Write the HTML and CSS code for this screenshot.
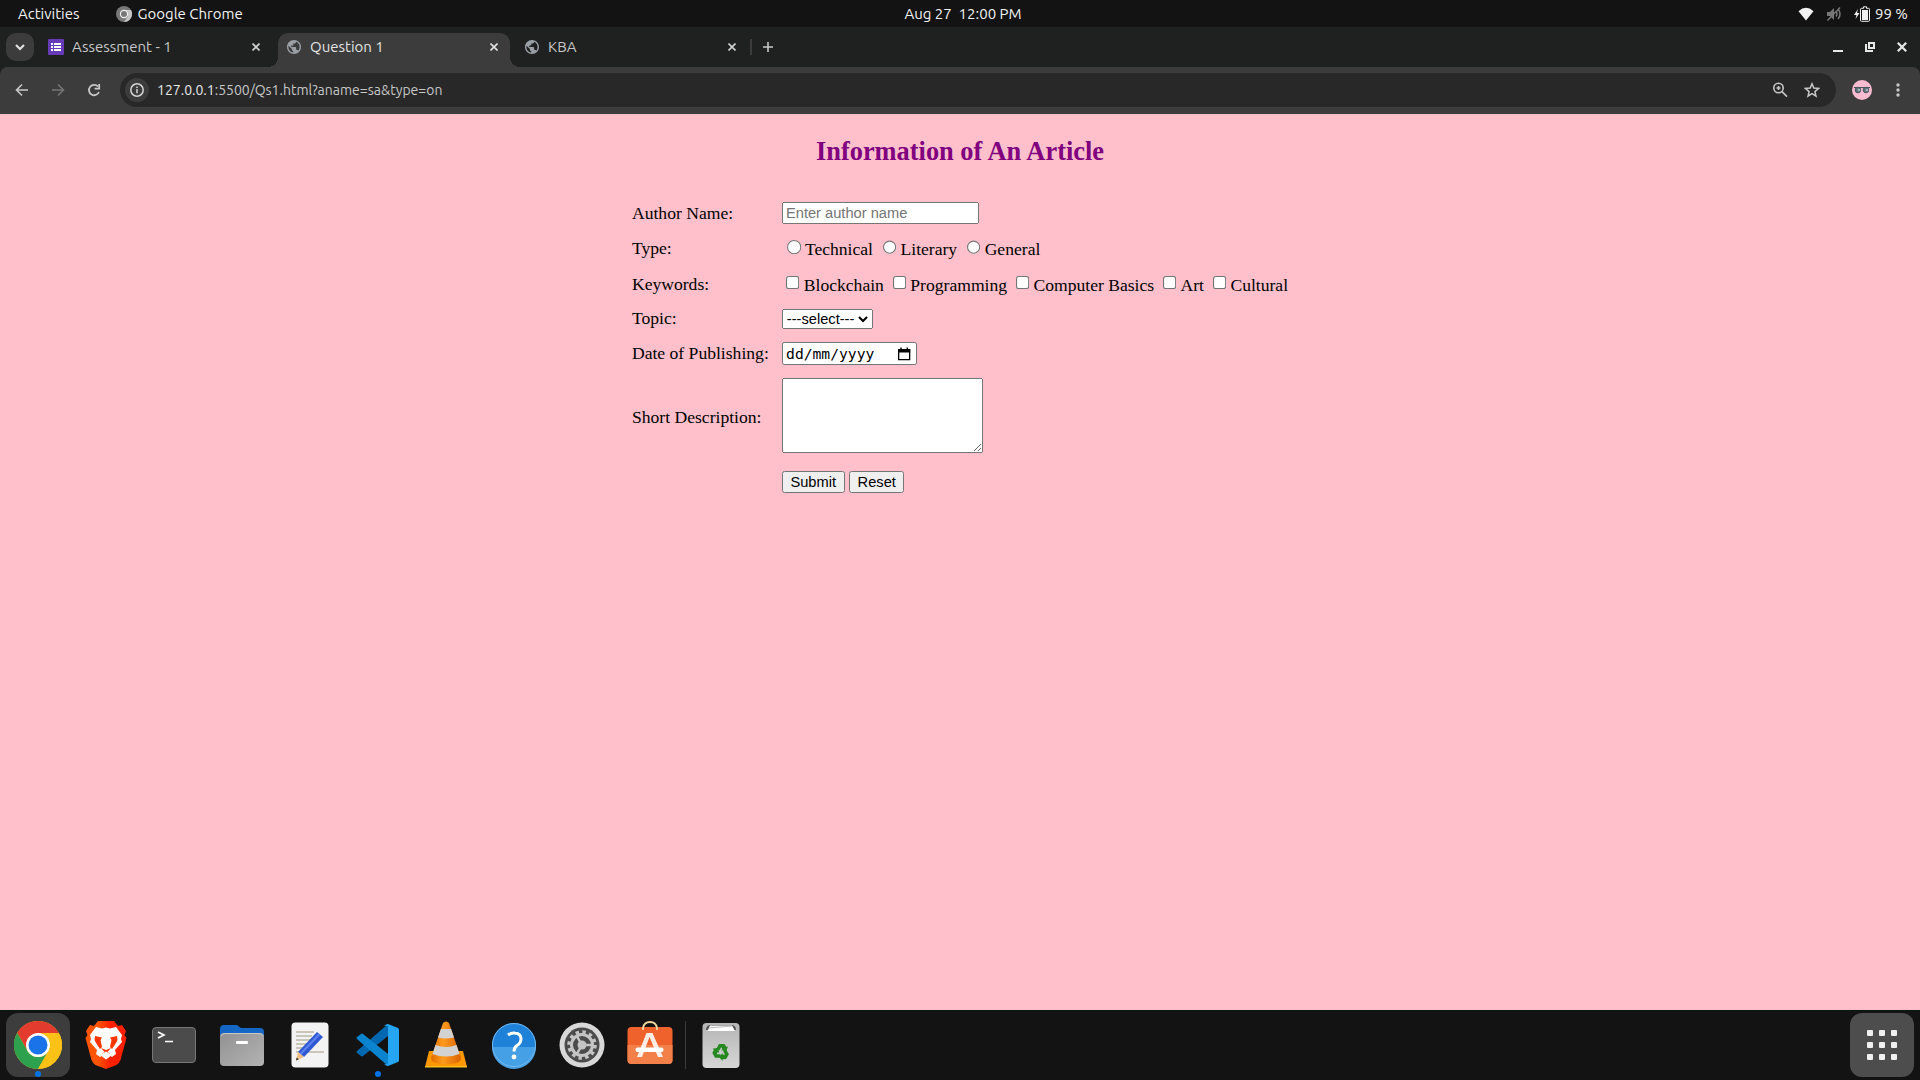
FILE: index.html
```html
<!DOCTYPE html>
<html lang="en-GB">
<head>
<meta charset="utf-8">
<title>Question 1</title>
<link rel="stylesheet" href="styles.css">
</head>
<body class="desktop">

<header class="panel">
  <div class="panel-left">
    <button class="panel-button" type="button">Activities</button>
    <button class="panel-button panel-app" type="button">
      <svg width="16" height="16" viewBox="0 0 16 16"><circle cx="8" cy="8" r="8" fill="#777"/><path d="M8 4h7a8 8 0 0 1-7 12l4-6z" fill="#c4c4c4"/><circle cx="8" cy="8" r="4.200" fill="#eee"/><circle cx="8" cy="8" r="3" fill="#777"/></svg>
      Google Chrome
    </button>
  </div>
  <time class="clock">Aug 27&nbsp; 12:00 PM</time>
  <div class="panel-right">
    <svg width="16" height="16" viewBox="0 0 16 16"><path d="M.5 5.200Q8-1.500 15.500 5.200L8 14.500z" fill="#f2f2f2"/></svg>
    <svg width="16" height="16" viewBox="0 0 16 16" fill="none" stroke="#777" stroke-width="1.500"><path d="M1 6h3l4-4v12l-4-4H1z" fill="#777" stroke="none"/><path d="M10 5.500q2 2.500 0 5M12 3q4 5 0 10M1.500 14.500L14 1.500"/></svg>
    <span class="battery">
      <svg width="16" height="16" viewBox="0 0 16 16"><path d="M4 3L0 9h2.500L1.500 13 5.500 7H3z" fill="#f2f2f2"/><path d="M9.500.8h3v1.500h2a1 1 0 0 1 1 1v11a1 1 0 0 1-1 1h-7a1 1 0 0 1-1-1v-11a1 1 0 0 1 1-1h2z" fill="none" stroke="#f2f2f2"/><rect x="8" y="4" width="6" height="10" fill="#f2f2f2"/></svg>
      99 %
    </span>
  </div>
</header>

<nav class="tab-strip">
  <button class="tab-search" type="button" aria-label="Search tabs"><svg width="10" height="10" viewBox="0 0 10 10"><path d="M1 3l4 4 4-4" fill="none" stroke="#e3e3e3" stroke-width="2"/></svg></button>
  <div class="tab">
    <svg width="16" height="16" viewBox="0 0 16 16"><rect width="16" height="16" rx="1" fill="#673ab7"/><path d="M3 4h2v2H3zm3 0h7v2H6zM3 7h2v2H3zm3 0h7v2H6zm-3 3h2v2H3zm3 0h7v2H6z" fill="#fff"/></svg>
    <a class="tab-title" href="#">Assessment - 1</a>
    <button class="tab-close" type="button" aria-label="Close tab"><svg width="8" height="8" viewBox="0 0 8 8"><path d="M.5.500l7 7m0-7l-7 7" stroke="#d0d0d0" stroke-width="1.600"/></svg></button>
  </div>
  <div class="tab tab-active">
    <svg width="16" height="16" viewBox="0.600 0.600 22.800 22.800"><path fill="#9aa0a6" d="M12 2C6.480 2 2 6.480 2 12s4.480 10 10 10 10-4.480 10-10S17.520 2 12 2zm-1 17.930c-3.950-.49-7-3.850-7-7.930 0-.62.08-1.210.21-1.790L9 15v1c0 1.100.9 2 2 2v1.930zm6.900-2.540c-.26-.81-1-1.390-1.900-1.390h-1v-3c0-.55-.45-1-1-1H8v-2h2c.55 0 1-.45 1-1V7h2c1.100 0 2-.9 2-2v-.41c2.930 1.190 5 4.060 5 7.410 0 2.080-.8 3.970-2.100 5.390z"/></svg>
    <a class="tab-title" href="#">Question 1</a>
    <button class="tab-close" type="button" aria-label="Close tab"><svg width="8" height="8" viewBox="0 0 8 8"><path d="M.5.500l7 7m0-7l-7 7" stroke="#e3e3e3" stroke-width="1.600"/></svg></button>
  </div>
  <div class="tab">
    <svg width="16" height="16" viewBox="0.600 0.600 22.800 22.800"><path fill="#9aa0a6" d="M12 2C6.480 2 2 6.480 2 12s4.480 10 10 10 10-4.480 10-10S17.520 2 12 2zm-1 17.930c-3.950-.49-7-3.850-7-7.930 0-.62.08-1.210.21-1.790L9 15v1c0 1.100.9 2 2 2v1.930zm6.900-2.540c-.26-.81-1-1.390-1.900-1.390h-1v-3c0-.55-.45-1-1-1H8v-2h2c.55 0 1-.45 1-1V7h2c1.100 0 2-.9 2-2v-.41c2.930 1.190 5 4.060 5 7.410 0 2.080-.8 3.970-2.100 5.390z"/></svg>
    <a class="tab-title" href="#">KBA</a>
    <button class="tab-close" type="button" aria-label="Close tab"><svg width="8" height="8" viewBox="0 0 8 8"><path d="M.5.500l7 7m0-7l-7 7" stroke="#d0d0d0" stroke-width="1.600"/></svg></button>
  </div>
  <span class="tab-divider"></span>
  <button class="new-tab" type="button" aria-label="New tab"><svg width="10" height="10" viewBox="0 0 10 10"><path d="M5 0v10M0 5h10" stroke="#c7c7c7" stroke-width="1.600"/></svg></button>
  <div class="window-controls">
    <button type="button" aria-label="Minimise"><svg width="10" height="10" viewBox="0 0 10 10"><path d="M0 9h10" stroke="#e8e8e8" stroke-width="2"/></svg></button>
    <button type="button" aria-label="Restore"><svg width="10" height="10" viewBox="0 0 10 10" fill="none" stroke="#e8e8e8" stroke-width="2"><path d="M4 1h5v5H4z"/><path d="M1 2v7h7"/></svg></button>
    <button type="button" aria-label="Close"><svg width="10" height="10" viewBox="0 0 10 10"><path d="M.8.800l8.400 8.400m0-8.400L.8 9.200" stroke="#e8e8e8" stroke-width="2.200"/></svg></button>
  </div>
</nav>

<div class="toolbar">
  <div class="nav-buttons">
    <button type="button" aria-label="Back"><svg width="16" height="16" viewBox="0 0 16 16" fill="none" stroke="#c7c7c7" stroke-width="1.600"><path d="M14 8H3M8 2.500L2.500 8 8 13.500"/></svg></button>
    <button type="button" aria-label="Forward"><svg width="16" height="16" viewBox="0 0 16 16" fill="none" stroke="#757575" stroke-width="1.600"><path d="M2 8h11M8 2.500L13.500 8 8 13.500"/></svg></button>
    <button type="button" aria-label="Reload"><svg width="16" height="16" viewBox="0 0 16 16" fill="none" stroke="#c7c7c7" stroke-width="1.800"><path d="M13 10a5.200 5.200 0 1 1-1-5.500"/><path d="M13.200 2v4.700H8.600"/></svg></button>
  </div>
  <div class="address-bar">
    <button class="site-info" type="button" aria-label="Site information"><svg width="16" height="16" viewBox="0 0 16 16"><circle cx="8" cy="8" r="6.200" fill="none" stroke="#d5d5d5" stroke-width="1.500"/><path d="M8 7v4.300M8 4.500v1.600" stroke="#d5d5d5" stroke-width="1.500"/></svg></button>
    <span class="url"><span class="url-host">127.0.0.1</span>:5500/Qs1.html?aname=sa&amp;type=on</span>
    <button type="button" aria-label="Zoom"><svg width="16" height="16" viewBox="0 0 16 16" fill="none" stroke="#c7c7c7" stroke-width="1.600"><circle cx="6.500" cy="6" r="4.700"/><path d="M10 9.600l5 5M6.500 4v4M4.500 6h4"/></svg></button>
    <button type="button" aria-label="Bookmark"><svg width="16" height="16" viewBox="0 0 16 16" fill="none" stroke="#c7c7c7" stroke-width="1.500"><path d="M8 1.800l1.800 4.300 4.700.400-3.600 3.100 1.100 4.600L8 11.700l-4 2.500 1.100-4.600L1.500 6.500l4.700-.4z"/></svg></button>
  </div>
  <button class="profile" type="button" aria-label="Profile"><svg width="20" height="20" viewBox="0 0 20 20"><circle cx="10" cy="10" r="10" fill="#f8bbd0"/><path d="M2 7.500h16" stroke="#455" stroke-width="1"/><circle cx="6" cy="10" r="2.800" fill="#607078" stroke="#4a565c"/><circle cx="14" cy="10" r="2.800" fill="#607078" stroke="#4a565c"/><circle cx="7" cy="10" r="1.300" fill="#a4b8c2"/><circle cx="15" cy="10" r="1.300" fill="#a4b8c2"/></svg></button>
  <button class="menu" type="button" aria-label="Menu"><svg width="16" height="16" viewBox="0 0 16 16" fill="#c7c7c7"><circle cx="8" cy="3" r="1.700"/><circle cx="8" cy="8" r="1.700"/><circle cx="8" cy="13" r="1.700"/></svg></button>
</div>

<main class="page">
  <h2 class="page-title">Information of An Article</h2>
  <form class="article-form" onsubmit="return false">
    <table class="form-table">
      <tr>
        <td><label for="aname">Author Name:</label></td>
        <td><input type="text" id="aname" name="aname" placeholder="Enter author name"></td>
      </tr>
      <tr>
        <td>Type:</td>
        <td>
          <input type="radio" id="technical" name="type"><label for="technical">Technical</label>
          <input type="radio" id="literary" name="type"><label for="literary">Literary</label>
          <input type="radio" id="general" name="type"><label for="general">General</label>
        </td>
      </tr>
      <tr>
        <td>Keywords:</td>
        <td>
          <input type="checkbox" id="blockchain"><label for="blockchain">Blockchain</label>
          <input type="checkbox" id="programming"><label for="programming">Programming</label>
          <input type="checkbox" id="basics"><label for="basics">Computer Basics</label>
          <input type="checkbox" id="art"><label for="art">Art</label>
          <input type="checkbox" id="cultural"><label for="cultural">Cultural</label>
        </td>
      </tr>
      <tr>
        <td><label for="topic">Topic:</label></td>
        <td><select id="topic"><option>---select---</option></select></td>
      </tr>
      <tr>
        <td><label for="published">Date of Publishing:</label></td>
        <td>
          <span class="date-field">
            <input type="text" id="published" placeholder="dd/mm/yyyy">
            <button type="button" aria-label="Show date picker"><svg width="13" height="13" viewBox="0 0 13 13"><path d="M1.500 2.500h10v9h-10z" fill="none" stroke="#000" stroke-width="1.200"/><path d="M1 2h11v3H1zM3 .5h1.300v2H3zm5.700 0H10v2H8.700z"/></svg></button>
          </span>
        </td>
      </tr>
      <tr>
        <td><label for="description">Short Description:</label></td>
        <td><textarea id="description" rows="4" cols="20"></textarea></td>
      </tr>
      <tr>
        <td></td>
        <td><button type="submit">Submit</button> <button type="reset">Reset</button></td>
      </tr>
    </table>
  </form>
</main>

<footer class="dock">
  <button class="dock-item dock-focused dock-running" type="button" aria-label="Google Chrome">
    <svg width="48" height="48" viewBox="0 0 48 48"><circle cx="24" cy="24" r="24" fill="#fbc116"/><path d="M3.200 12a24 24 0 0 1 41.600 0H24L13.600 30z" fill="#e33b2e"/><path d="M3.200 12L13.600 30a12 12 0 0 0 20.800 0L24 48A24 24 0 0 1 3.200 12z" fill="#2da14d"/><path d="M24 12h20.800A24 24 0 0 1 24 48l10.400-18A12 12 0 0 0 24 12z" fill="#fbc116"/><circle cx="24" cy="24" r="12" fill="#fff"/><circle cx="24" cy="24" r="9.500" fill="#1a73e8"/></svg>
  </button>
  <button class="dock-item" type="button" aria-label="Brave">
    <svg width="48" height="48" viewBox="0 0 48 48"><defs><linearGradient id="brave"><stop offset=".3" stop-color="#ff5500"/><stop offset=".6" stop-color="#ff2000"/></linearGradient></defs><path d="M16 0h16l4 5 4-1 4 6-1.500 4 2 3-6 22q-1 3-4 5L24 48l-10.500-4q-3-2-4-5l-6-22 2-3L4 10l4-6 4 1z" fill="url(#brave)"/><path d="M14 6l6 1.500 4-1 4 1L34 6l6 8-1 4 1 3-7 8 1 4-4 3-6-4-6 4-4-3 1-4-7-8 1-3-1-4z" fill="#fff"/><path d="M13 15l7 1.500-1.500 2.500 1.500 7-2 2-4-6-1.500-3zM35 15l-7 1.500 1.500 2.500-1.500 7 2 2 4-6 1.500-3z" fill="#fb3600"/><path d="M19 27l5 2 5-2-3.500 4 5 3.500-6.500-2.500-6.500 2.500 5-3.500z" fill="#fb3600"/><path d="M24 30.500l6 3.500-6 4.500-6-4.500z" fill="#fff"/></svg>
  </button>
  <button class="dock-item" type="button" aria-label="Terminal">
    <svg width="48" height="48" viewBox="0 0 48 48"><rect x="2.500" y="6.500" width="43" height="35" rx="3.500" fill="#4b4b4b" stroke="#777"/><path d="M8 11l6 3-6 3M15 20.500h8" fill="none" stroke="#fff" stroke-width="1.600"/></svg>
  </button>
  <button class="dock-item" type="button" aria-label="Files">
    <svg width="48" height="48" viewBox="0 0 48 48"><defs><linearGradient id="files" x2="1" y2="1"><stop stop-color="#929292"/><stop offset="1" stop-color="#b3b3b3"/></linearGradient></defs><path d="M2 8q0-4 4-4h13l4 3h19q4 0 4 4v16H2z" fill="#1567c5"/><rect x="2" y="12" width="44" height="33" rx="4" fill="url(#files)"/><path d="M3 15q1-2.500 4-2.500h34q3 0 4 2.500" fill="none" stroke="#c8c8c8"/><rect x="18" y="20" width="12" height="3" rx="1" fill="#fff"/></svg>
  </button>
  <button class="dock-item" type="button" aria-label="Text Editor">
    <svg width="48" height="48" viewBox="0 0 48 48"><rect x="5.500" y="1.500" width="37" height="45" rx="4" fill="#f3f3f3"/><path d="M10 11h18M10 15h16M10 19h17M10 23h12M10 27h8M10 31h28" stroke="#c9c5b9" stroke-width="2"/><path d="M12 31l19-20 6 5-19 20z" fill="#2f59d3"/><path d="M14.500 33l19-20" stroke="#5c83ee" stroke-width="2"/><path d="M12 31l6 5-8 3.500z" fill="#f5bd83"/><path d="M10.600 36.500L10 39.500l3-1.200z" fill="#333"/></svg>
  </button>
  <button class="dock-item dock-running" type="button" aria-label="Visual Studio Code">
    <svg width="48" height="48" viewBox="0 0 48 48"><path d="M34 3v12L9 35q-1 .8-2 0l-4-3q-1-1 0-2z" fill="#0068b0"/><path d="M34 45V33L9 13q-1-.8-2 0l-4 3q-1 1 0 2z" fill="#0a84cf"/><path d="M34 3l10 4q1 .5 1 2v30q0 1.500-1 2l-10 4q-2 0-4-2 4 1 4-1V6q0-2-4-1 2-2 4-2z" fill="#26a6f2"/></svg>
  </button>
  <button class="dock-item" type="button" aria-label="VLC media player">
    <svg width="48" height="48" viewBox="0 0 48 48"><defs><linearGradient id="cone"><stop stop-color="#e06c00"/><stop offset=".4" stop-color="#ff9a1e"/><stop offset="1" stop-color="#d96200"/></linearGradient></defs><path d="M7 30h34l4 16H3z" fill="#ff9800"/><path d="M3 45h42v1.500H3z" fill="#ffc020"/><path d="M21 2q3-3 6 0l12 35q0 6-15 6T9 37z" fill="url(#cone)"/><path d="M18.900 8h10.200l2.900 8.500q-8 2-16 0z" fill="#d2d2d2"/><path d="M13.500 24q10.500 4 21 0l3 9q-13.500 5-27 0z" fill="#d2d2d2"/></svg>
  </button>
  <button class="dock-item" type="button" aria-label="Help">
    <svg width="48" height="48" viewBox="0 0 48 48"><circle cx="24" cy="24" r="22" fill="#1f82d8"/><path d="M2 26h44a22 22 0 0 1-44 0z" fill="#46a0e5"/><circle cx="24" cy="24" r="21.500" fill="none" stroke="#75b8ed"/><path d="M18 14q3-2.500 7-2 6 .5 6 6 0 4-4 6.500-3 2-3 6" fill="none" stroke="#fff" stroke-width="3"/><circle cx="24" cy="36" r="2.400" fill="#fff"/></svg>
  </button>
  <button class="dock-item" type="button" aria-label="Settings">
    <svg width="48" height="48" viewBox="0 0 48 48"><circle cx="24" cy="24" r="22.500" fill="#d8d8d8"/><circle cx="24" cy="24" r="17.500" fill="#4b4b4b"/><circle cx="24" cy="24" r="13" fill="none" stroke="#c4c4c4" stroke-width="3.500" stroke-dasharray="3.400 3.407"/><circle cx="24" cy="24" r="10.500" fill="none" stroke="#c4c4c4" stroke-width="3"/><path d="M24 24h10M24 24l-5-8.700M24 24l-5 8.700" stroke="#c4c4c4" stroke-width="2.500"/><circle cx="24" cy="24" r="4.500" fill="#c4c4c4"/></svg>
  </button>
  <button class="dock-item" type="button" aria-label="Software">
    <svg width="48" height="48" viewBox="0 0 48 48"><rect x="1.500" y="6" width="45" height="37" rx="4" fill="#f0622b"/><path d="M1.500 24h45v15q0 4-4 4h-37q-4 0-4-4z" fill="#f37f49"/><path d="M17 9V7q1-6 7-6t7 6v2" fill="none" stroke="#f3d9a0" stroke-width="1.800"/><path d="M11 36l9.500-24h6L37 36h-5l-8.500-20L16 36z" fill="#fff" fill-opacity=".88"/><rect x="9.500" y="26.500" width="28" height="4.500" rx="2" fill="#fff"/></svg>
  </button>
  <span class="dock-divider"></span>
  <button class="dock-item" type="button" aria-label="Trash">
    <svg width="48" height="48" viewBox="0 0 48 48"><defs><linearGradient id="trash" x2="0" y2="1"><stop stop-color="#b5b5b5"/><stop offset="1" stop-color="#d6d6d6"/></linearGradient><path id="arrow" d="M-4.500-3.500L-2-8h5.500l2 3 1.500-.8-1.800 5.300-5.200-1.500 1.600-.8-1.400-2-1.800 3.300z"/></defs><rect x="5.500" y="2" width="37" height="45" rx="4" fill="url(#trash)"/><path d="M9 9q0-5 5-5h20q5 0 5 5" fill="#555"/><path d="M10.500 10L13 4.500h22l3 5.500z" fill="#fff"/><path d="M12 7l23-2" stroke="#bbb"/><g fill="#26891f" transform="translate(24 31)"><use href="#arrow"/><use href="#arrow" transform="rotate(120)"/><use href="#arrow" transform="rotate(240)"/></g></svg>
  </button>
  <button class="dock-item dock-apps" type="button" aria-label="Show Applications">
    <svg width="48" height="48" viewBox="0 0 48 48" fill="#f0f0f0"><rect x="9" y="9" width="6" height="6" rx="1"/><rect x="21" y="9" width="6" height="6" rx="1"/><rect x="33" y="9" width="6" height="6" rx="1"/><rect x="9" y="21" width="6" height="6" rx="1"/><rect x="21" y="21" width="6" height="6" rx="1"/><rect x="33" y="21" width="6" height="6" rx="1"/><rect x="9" y="33" width="6" height="6" rx="1"/><rect x="21" y="33" width="6" height="6" rx="1"/><rect x="33" y="33" width="6" height="6" rx="1"/></svg>
  </button>
</footer>
</body>
</html>
```

FILE: styles.css
```css
* { box-sizing: border-box; }

.desktop {
  margin: 0;
  min-height: 100vh;
  display: flex;
  flex-direction: column;
  background: #131313;
  color: #f2f2f2;
  font: 15px/20px Ubuntu, "Noto Sans", sans-serif;
}

svg { display: block; flex: none; }

.panel button, .tab-strip button, .toolbar button, .dock button {
  display: flex;
  align-items: center;
  justify-content: center;
  padding: 0;
  border: 0;
  background: none;
  color: inherit;
  font: inherit;
}

/* System panel */
.panel {
  display: grid;
  grid-template-columns: 1fr auto 1fr;
  align-items: center;
  height: 27px;
  padding: 0 12px 0 18px;
}
.panel-left, .panel-right { display: flex; align-items: center; }
.panel-left { gap: 36px; }
.panel .panel-app { gap: 6px; }
.panel-right { justify-content: flex-end; gap: 12px; }
.battery { display: flex; align-items: center; gap: 5px; }

/* Tabs */
.tab-strip {
  position: relative;
  z-index: 1;
  display: flex;
  align-items: center;
  gap: 6px;
  height: 40px;
  padding: 0 13px 0 6px;
  background: #1f2120;
}
.tab-strip .tab-search {
  width: 28px;
  height: 28px;
  border-radius: 10px;
  background: #3c3c3c;
}
.tab {
  position: relative;
  display: flex;
  align-items: center;
  gap: 8px;
  width: 232px;
  height: 34px;
  padding: 0 8px;
  color: #c7c7c7;
}
.tab-active {
  align-self: flex-end;
  padding-bottom: 6px;
  border-radius: 10px 10px 0 0;
  background: #3c3c3c;
  color: #e3e3e3;
}
.tab-active::before, .tab-active::after {
  content: "";
  position: absolute;
  bottom: 0;
  width: 10px;
  height: 10px;
}
.tab-active::before { right: 100%; background: radial-gradient(circle at 0 0, #1f2120 10px, #3c3c3c 10px); }
.tab-active::after { left: 100%; background: radial-gradient(circle at 100% 0, #1f2120 10px, #3c3c3c 10px); }
.tab-title { flex: 1; color: inherit; text-decoration: none; }
.tab .tab-close { width: 16px; height: 16px; }
.tab-divider { width: 2px; height: 16px; margin-left: -4px; background: #3c3c3c; }
.tab-strip .new-tab { width: 20px; height: 20px; }
.window-controls { display: flex; gap: 22px; margin-left: auto; }

/* Toolbar */
.toolbar {
  display: flex;
  align-items: center;
  height: 47px;
  padding: 6px 14px 7px;
  border-radius: 8px 8px 0 0;
  background: #3c3c3c;
  box-shadow: 0 -10px #1f2120;
}
.nav-buttons { display: flex; gap: 20px; }
.address-bar {
  flex: 1;
  display: flex;
  align-items: center;
  gap: 16px;
  height: 34px;
  margin: 0 16px 0 18px;
  padding: 0 16px 0 5px;
  border-radius: 17px;
  background: #282828;
}
.toolbar .site-info { width: 24px; height: 24px; border-radius: 12px; background: #3c3c3c; }
.url { flex: 1; margin-left: -8px; color: #c7c7c7; font-size: 14px; }
.url-host { color: #e8e8e8; }
.toolbar .menu { margin-left: 18px; }

/* Page content, shown at the browser's 110% zoom level */
.page {
  flex: 1;
  zoom: 1.1;
  padding: 0 8px;
  background: pink;
  color: #000;
  font: 16px "Liberation Serif", serif;
}
.page * { box-sizing: revert; }
.page-title { margin: 20px 0 25px; color: purple; font-size: 24px; text-align: center; }
.form-table { margin: 0 auto; }
.form-table td { padding: 5px; }
.date-field {
  display: inline-flex;
  align-items: center;
  width: 121px;
  height: 19px;
  border: 1px solid #767676;
  border-radius: 2px;
  background: #fff;
}
.date-field input {
  flex: 1;
  min-width: 0;
  padding: 0 0 0 3px;
  border: 0;
  background: none;
  font-family: monospace;
}
.date-field input::placeholder { color: #000; }
.date-field button { margin-right: 4px; padding: 0; border: 0; background: none; }

/* Dock */
.dock {
  display: flex;
  align-items: center;
  gap: 4px;
  height: 70px;
  padding: 0 6px;
}
.dock .dock-item { position: relative; width: 64px; height: 64px; border-radius: 12px; }
.dock .dock-focused { background: #3d3d3d; }
.dock-running::after {
  content: "";
  position: absolute;
  bottom: 0;
  left: 29px;
  width: 6px;
  height: 6px;
  border-radius: 3px;
  background: #0073e5;
}
.dock-divider { width: 1px; height: 48px; margin: 0 -1px; background: #3d3d3d; }
.dock .dock-apps { margin-left: auto; background: #4d4d4d; }
```
